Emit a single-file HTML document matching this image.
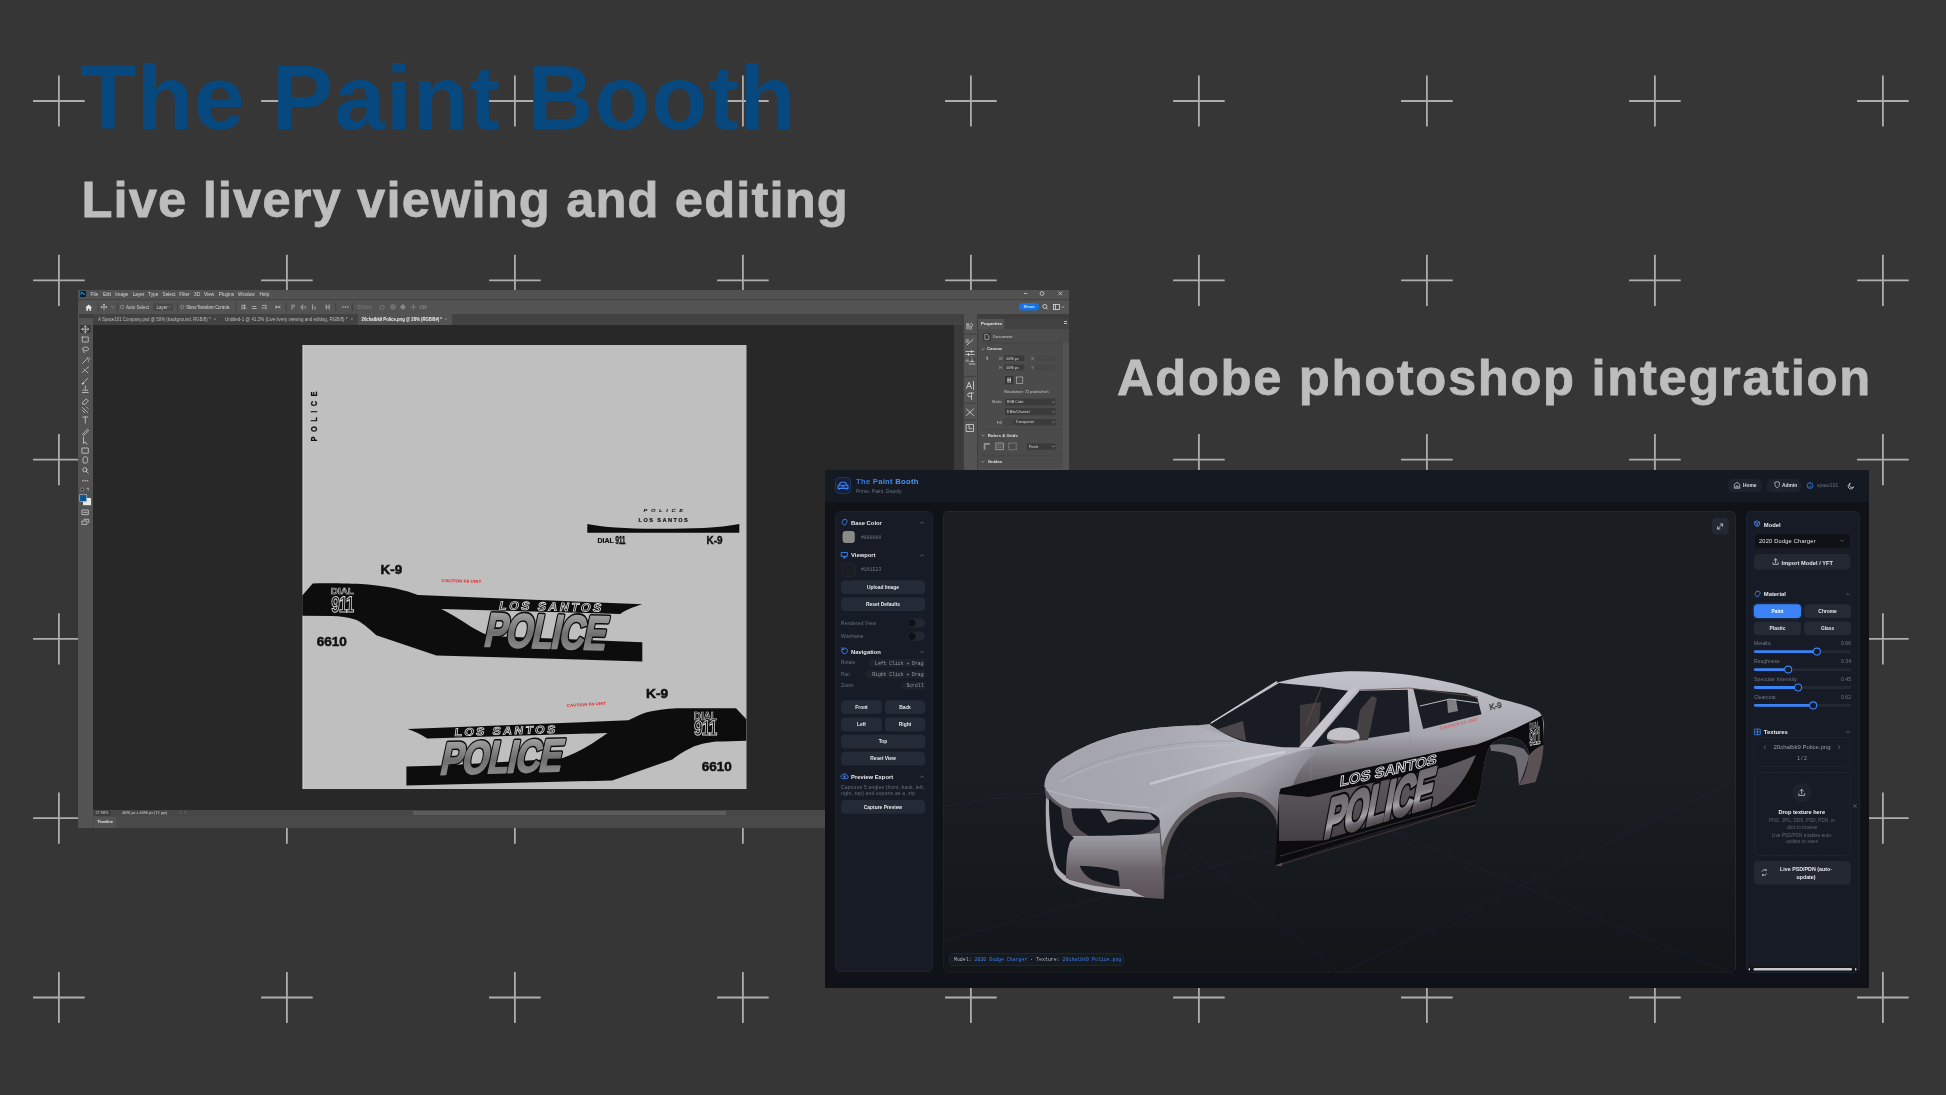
<!DOCTYPE html>
<html><head><meta charset="utf-8">
<style>
*{margin:0;padding:0;box-sizing:border-box}
html,body{width:1946px;height:1095px;overflow:hidden;background:#363636;font-family:"Liberation Sans",sans-serif}
#wrap{position:absolute;left:0;top:0;width:1946px;height:1095px;will-change:transform}
.abs{position:absolute}
svg{overflow:visible}
#title{position:absolute;left:80px;top:52.4px;font-size:91.7px;font-weight:bold;color:#07487e;white-space:nowrap;line-height:1;letter-spacing:0.9px}
#sub{position:absolute;left:81.5px;top:175.1px;font-size:50.7px;font-weight:bold;color:#bdbdbd;white-space:nowrap;line-height:1;letter-spacing:1.13px;-webkit-text-stroke:0.8px #bdbdbd}
#sub2{position:absolute;left:1117px;top:352.9px;font-size:50.7px;font-weight:bold;color:#bdbdbd;white-space:nowrap;line-height:1;letter-spacing:1.68px;-webkit-text-stroke:0.8px #bdbdbd}
</style></head><body><div id="wrap">
<svg class="abs" style="left:0;top:0" width="1946" height="1095"><path d="M33.1 101.0h51.6M58.9 75.4v51.2M33.1 280.3h51.6M58.9 254.7v51.2M33.1 459.6h51.6M58.9 434.0v51.2M33.1 638.9h51.6M58.9 613.3v51.2M33.1 818.2h51.6M58.9 792.6v51.2M33.1 997.5h51.6M58.9 971.9v51.2M261.1 101.0h51.6M286.9 75.4v51.2M261.1 280.3h51.6M286.9 254.7v51.2M261.1 459.6h51.6M286.9 434.0v51.2M261.1 638.9h51.6M286.9 613.3v51.2M261.1 818.2h51.6M286.9 792.6v51.2M261.1 997.5h51.6M286.9 971.9v51.2M489.1 101.0h51.6M514.9 75.4v51.2M489.1 280.3h51.6M514.9 254.7v51.2M489.1 459.6h51.6M514.9 434.0v51.2M489.1 638.9h51.6M514.9 613.3v51.2M489.1 818.2h51.6M514.9 792.6v51.2M489.1 997.5h51.6M514.9 971.9v51.2M717.1 101.0h51.6M742.9 75.4v51.2M717.1 280.3h51.6M742.9 254.7v51.2M717.1 459.6h51.6M742.9 434.0v51.2M717.1 638.9h51.6M742.9 613.3v51.2M717.1 818.2h51.6M742.9 792.6v51.2M717.1 997.5h51.6M742.9 971.9v51.2M945.1 101.0h51.6M970.9 75.4v51.2M945.1 280.3h51.6M970.9 254.7v51.2M945.1 459.6h51.6M970.9 434.0v51.2M945.1 638.9h51.6M970.9 613.3v51.2M945.1 818.2h51.6M970.9 792.6v51.2M945.1 997.5h51.6M970.9 971.9v51.2M1173.1 101.0h51.6M1198.9 75.4v51.2M1173.1 280.3h51.6M1198.9 254.7v51.2M1173.1 459.6h51.6M1198.9 434.0v51.2M1173.1 638.9h51.6M1198.9 613.3v51.2M1173.1 818.2h51.6M1198.9 792.6v51.2M1173.1 997.5h51.6M1198.9 971.9v51.2M1401.1 101.0h51.6M1426.9 75.4v51.2M1401.1 280.3h51.6M1426.9 254.7v51.2M1401.1 459.6h51.6M1426.9 434.0v51.2M1401.1 638.9h51.6M1426.9 613.3v51.2M1401.1 818.2h51.6M1426.9 792.6v51.2M1401.1 997.5h51.6M1426.9 971.9v51.2M1629.1 101.0h51.6M1654.9 75.4v51.2M1629.1 280.3h51.6M1654.9 254.7v51.2M1629.1 459.6h51.6M1654.9 434.0v51.2M1629.1 638.9h51.6M1654.9 613.3v51.2M1629.1 818.2h51.6M1654.9 792.6v51.2M1629.1 997.5h51.6M1654.9 971.9v51.2M1857.1 101.0h51.6M1882.9 75.4v51.2M1857.1 280.3h51.6M1882.9 254.7v51.2M1857.1 459.6h51.6M1882.9 434.0v51.2M1857.1 638.9h51.6M1882.9 613.3v51.2M1857.1 818.2h51.6M1882.9 792.6v51.2M1857.1 997.5h51.6M1882.9 971.9v51.2" stroke="#adadad" stroke-width="1.8" fill="none"/></svg>
<div id="title">The Paint Booth</div>
<div id="sub">Live livery viewing and editing</div>
<div id="sub2">Adobe photoshop integration</div>
<div id="ps" class="abs" style="left:78px;top:290px;width:991px;height:538px;background:#505050;overflow:hidden">
  <!-- menubar -->
  <div class="abs" style="left:0;top:0;width:991px;height:10px;background:#525252;border-bottom:1px solid #424242"></div>
  <div class="abs" style="left:1.7px;top:1px;width:6.3px;height:5.7px;background:#001e36;border-radius:1px;color:#31a8ff;font:bold 4px/5.7px 'Liberation Sans';text-align:center">Ps</div>
  <div class="abs" style="left:0;top:1.5px;font:4.7px/6px 'Liberation Sans';color:#d6d6d6;white-space:nowrap"><span class="abs" style="left:12.6px">File</span><span class="abs" style="left:24.9px">Edit</span><span class="abs" style="left:37.2px">Image</span><span class="abs" style="left:54.7px">Layer</span><span class="abs" style="left:70.1px">Type</span><span class="abs" style="left:84.5px">Select</span><span class="abs" style="left:101.2px">Filter</span><span class="abs" style="left:116.1px">3D</span><span class="abs" style="left:126.1px">View</span><span class="abs" style="left:140.8px">Plugins</span><span class="abs" style="left:160.0px">Window</span><span class="abs" style="left:181.6px">Help</span></div>
  <svg class="abs" style="left:940px;top:0" width="51" height="10"><g stroke="#d0d0d0" stroke-width="0.8" fill="none"><path d="M6 3.5h3.2"/><circle cx="24" cy="3.5" r="1.9"/><path d="M40.6 1.6l3.6 3.6M44.2 1.6l-3.6 3.6"/></g></svg>
  <!-- options bar -->
  <div class="abs" style="left:0;top:10.5px;width:991px;height:13px;background:#535353"></div>
  <svg class="abs" style="left:0;top:10px" width="991" height="14">
    <g fill="#e6e6e6"><path d="M7.3 7.6l3.4-3.2 3.4 3.2h-1v3.2h-1.7v-2.1h-1.4v2.1h-1.7v-3.2z"/></g>
    <g stroke="#3f3f3f" stroke-width="0.9"><path d="M20 2.5v9M39.4 2.5v9M99.5 2.5v9M157.8 2.5v9M208.3 2.5v9M257.7 2.5v9M274.3 2.5v9"/></g>
    <g stroke="#d0d0d0" stroke-width="0.7" fill="none">
      <path d="M23 7h6M26 4v6M23 7l1-1M23 7l1 1M29 7l-1-1M29 7l-1 1M26 4l-1 1M26 4l1 1"/>
      <path d="M33.5 6.5l1.1 1.1 1.1-1.1" stroke="#aaa"/>
      <circle cx="44.1" cy="7" r="1.7" stroke="#999"/>
      <circle cx="104.2" cy="7" r="1.7" stroke="#999"/>
      <path d="M164 4.5v5M165 5.5h2.5M165 8h3.5M166.4 4.5v5M174.3 6.5h4M174 8.5h4.6M188 4.5v5M184 5.5h3M183.5 8h4M197 7h5.5M197.5 5.5l1.5 1.5-1.5 1.5M202 5.5l-1.5 1.5 1.5 1.5"/>
      <path d="M214 4.5v5M216 4.5v3M224.7 4.5v5M223.2 6v2.5M227.2 6v2.5M234.6 4.5v5M237 6.5v3M248.2 4.5v5M251.2 4.5v5M248.5 7h2.4"/>
      <path d="M264.3 7h1.2M266.8 7h1.2M269.3 7h1.2" stroke="#e8e8e8" stroke-width="1.2"/>
    </g>
    <g font-family="Liberation Sans" font-size="4.5">
      <text x="48.1" y="8.7" fill="#cfcfcf">Auto Select</text>
      <rect x="75.2" y="3.6" width="19.7" height="7" fill="#474747"/>
      <text x="78.5" y="8.7" fill="#cfcfcf">Layer</text>
      <path d="M90.5 6.6l1 1 1-1" stroke="#aaa" stroke-width="0.5" fill="none"/>
      <text x="108.2" y="8.7" fill="#cfcfcf" textLength="43.4">Show Transform Controls</text>
      <text x="278.6" y="8.7" fill="#7a7a7a" textLength="16">3D Mode:</text>
    </g>
    <g stroke="#8a8a8a" stroke-width="0.7" fill="none">
      <path d="M302 7.5c0-2 3-3 4-1s-1 3-2.5 3-1.5-1-1.5-2z"/><circle cx="315" cy="7" r="2.4"/><circle cx="315" cy="7" r="1.2"/>
      <path d="M322.4 7h5M324.9 4.5v5M322.4 7l2.5-2.5 2.5 2.5-2.5 2.5z" fill="#8a8a8a"/>
      <path d="M332.4 7h6M335.4 4v6"/>
      <path d="M342 5.8h3.5v2.6h-3.5zM345.5 7l2.5-1.8v3.6z"/>
    </g>
    <rect x="941" y="3" width="20" height="7.5" rx="3.75" fill="#1473e6"/>
    <text x="951" y="8.4" font-family="Liberation Sans" font-size="4.2" fill="#fff" text-anchor="middle">Share</text>
    <g stroke="#ddd" stroke-width="0.8" fill="none"><circle cx="966.8" cy="6.4" r="2"/><path d="M968.2 7.8l1.5 1.5"/><rect x="975.5" y="4.5" width="6" height="5"/><path d="M977.5 4.5v5M984 6.5l1 1 1-1"/></g>
  </svg>
  <!-- tab bar -->
  <div class="abs" style="left:15px;top:23.5px;width:870px;height:11px;background:#424242"></div>
  <div class="abs" style="left:280px;top:24px;width:93.6px;height:10.5px;background:#535353"></div>
  <svg class="abs" style="left:0;top:23.5px" width="400" height="11">
    <g font-family="Liberation Sans" font-size="4.7" fill="#bcbcbc">
      <text x="20" y="7.3" textLength="112.6" lengthAdjust="spacingAndGlyphs">A Space101 Company.psd @ 50% (background, RGB/8) *</text>
      <text x="147" y="7.3" textLength="122.5" lengthAdjust="spacingAndGlyphs">Untitled-1 @ 41.2% (Live livery viewing and editing, RGB/8) *</text>
      <text x="283.6" y="7.3" textLength="80.4" lengthAdjust="spacingAndGlyphs" fill="#f2f2f2" font-weight="bold">20chalbk9 Police.png @ 28% (RGB/8#) *</text>
    </g>
    <g stroke="#9a9a9a" stroke-width="0.5"><path d="M136 4.2l1.8 1.8M137.8 4.2l-1.8 1.8M273 4.2l1.8 1.8M274.8 4.2l-1.8 1.8M367 4.2l1.8 1.8M368.8 4.2l-1.8 1.8"/></g>
    <path d="M144 1v9" stroke="#3a3a3a" stroke-width="0.6"/>
  </svg>
  <!-- toolbar column -->
  <div class="abs" style="left:0;top:23.5px;width:15px;height:515px;background:#535353"></div>
  <div class="abs" style="left:1px;top:23.5px;width:14px;height:4px;background:#3e3e3e"></div>
  <div class="abs" style="left:1.6px;top:35px;width:11.4px;height:8px;background:#3a3a3a;border-radius:1px"></div>
  <svg class="abs" style="left:0;top:30px" width="15" height="240">
    <g stroke="#d6d6d6" stroke-width="0.75" fill="none" stroke-linecap="round" stroke-linejoin="round">
      <path d="M7.3 6v6.5M4 9.2h6.6M7.3 6l-1 1M7.3 6l1 1M7.3 12.5l-1-1M7.3 12.5l1-1M4 9.2l1-1M4 9.2l1 1M10.6 9.2l-1-1M10.6 9.2l-1 1"/>
      <path d="M4.3 17h6v5h-6z" stroke-dasharray="1 0.8"/>
      <path d="M4.5 29c0-2.6 6-2.6 6 0s-5 2.3-6 0M5.3 30.8l.8 2"/>
      <path d="M4.5 43.5l5.5-5.5M9 37.5l1.5 1.5M10.5 41v.5M11.5 39h.3"/>
      <path d="M4.5 52.5l2-2M6 49l4 4M8.5 48.5l2-1.5"/>
      <path d="M4.6 63.5l5-5"/><path d="M4.3 63.8l1.2-.5" stroke-width="1.4"/>
      <path d="M7.3 66v3.2M5 70.2h4.6M4.4 72.5h5.8"/>
      <path d="M5 82l3.2-3.2 2.2 2.2-3.2 3.2h-2.2z"/>
      <path d="M4.5 87.5l5 5M4.5 90.5l2 2M8.5 87l1.5 1.5"/>
      <path d="M4.8 97h5M7.3 97v6.2"/>
      <path d="M4.8 114l4.8-4.8 1.2 1.2-4.8 4.8z"/>
      <path d="M5.5 117v6.5l1.8-1.7 1.6 2.6"/>
      <path d="M4.3 128h6v5.2h-6z"/>
      <path d="M5 141.5c-.5-3 .5-5 2.3-5s2.6 2 2.3 5l-1 1.5h-2.6z"/>
      <circle cx="6.8" cy="149.8" r="2.1"/><path d="M8.3 151.3l2 2"/>
      <path d="M4.7 160.8h.5M7 160.8h.5M9.3 160.8h.5" stroke-width="1.1"/>
      <path d="M4.3 190h6v4.6h-6zM5.5 192.3h3.6"/>
      <path d="M4.3 201h4.6v3.4h-4.6zM6 199.3h4.8v3.4"/>
    </g>
    <circle cx="4.2" cy="169.5" r="1.4" fill="#111" stroke="#ddd" stroke-width="0.5"/>
    <path d="M8.6 168.3h1.7v2.2" stroke="#ddd" stroke-width="0.6" fill="none"/>
    <rect x="5" y="178" width="8" height="7.2" fill="#e8e8e8"/>
    <rect x="1.8" y="174.8" width="7" height="6.8" fill="#0b5394" stroke="#ddd" stroke-width="0.5"/>
  </svg>
  <!-- canvas -->
  <div class="abs" style="left:15px;top:34.5px;width:861px;height:485.5px;background:#282828"></div>
  <div class="abs" style="left:876px;top:34.5px;width:8.5px;height:485.5px;background:#3a3a3a"></div>
  <!-- icon column -->
  <div class="abs" style="left:884.5px;top:23.5px;width:15px;height:515px;background:#535353;border-left:1px solid #3e3e3e;border-right:1px solid #3e3e3e"></div>
  <svg class="abs" style="left:885px;top:28px" width="14" height="130">
    <g stroke="#d8d8d8" stroke-width="0.8" fill="none" stroke-linecap="round">
      <path d="M4 6v5M4 6h2v5M8 5.5c2 0 2 3 0 3s2 0 0 3"/>
      <path d="M4 27l6-5.5M3 22h2.5M3 24h2.5"/>
      <path d="M3 33.5h8M3 36.5h8M8.5 32.5v2M5.5 35.5v2"/>
      <path d="M3 41h2.5M3 43h2.5M6 46h6M9 40v2.5M7.5 43.5h3"/>
      <path d="M3.5 70.5l2.5-6.5 2.5 6.5M4.5 68.5h3M10.5 63.5v8"/>
      <path d="M6.5 75h4M8.5 75v6.5M6.5 75a1.8 1.8 0 0 0 0 3.6h2"/>
      <path d="M3.5 97.5l7-6.5M3.5 91l7 6.5"/>
      <path d="M3.5 106.5h7v7h-7zM6 107.5v3.2h3"/>
    </g>
    <g stroke="#3e3e3e" stroke-width="0.9"><path d="M1 16.1h12M1 40.9h12M1 58.3h12M1 85.4h12M1 101.9h12"/></g>
  </svg>
  <!-- properties panel -->
  <div class="abs" style="left:900px;top:23.5px;width:91px;height:5px;background:#3e3e3e"></div>
  <div class="abs" style="left:900px;top:28.5px;width:91px;height:10px;background:#424242"></div>
  <div class="abs" style="left:900px;top:28.5px;width:25.8px;height:10px;background:#535353;font:bold 4.3px/9.5px 'Liberation Sans';color:#e8e8e8;padding-left:3px">Properties</div>
  <div class="abs" style="left:986px;top:31px;width:3px;height:3px;border-top:0.7px solid #bbb;border-bottom:0.7px solid #bbb"></div>
  <div class="abs" style="left:900px;top:38.5px;width:91px;height:500px;background:#535353"></div>
  
  <svg class="abs" style="left:900px;top:38.5px" width="91" height="140">
    <rect x="0" y="0" width="91" height="140" fill="#4b4b4b"/>
    <rect x="85" y="14" width="6" height="126" fill="#535353"/>
    <rect x="5.1" y="4.1" width="7.6" height="7.5" fill="#383838"/>
    <path d="M6.8 5.4h2.6l1.4 1.4v3.6h-4z" stroke="#ddd" stroke-width="0.55" fill="none"/>
    <g font-family="Liberation Sans" font-size="4.3" fill="#cfcfcf">
      <text x="14.9" y="9.4">Document</text>
      <text x="8.9" y="21.4" font-weight="bold" fill="#e0e0e0">Canvas</text>
      <text x="20.9" y="30.6" fill="#aaa" font-size="3.8">W</text>
      <text x="21.3" y="39.9" fill="#aaa" font-size="3.8">H</text>
      <text x="53.3" y="30.6" fill="#aaa" font-size="3.8">X</text>
      <text x="53.3" y="39.9" fill="#aaa" font-size="3.8">Y</text>
      <text x="26.2" y="64" font-size="3.7" textLength="44.4">Resolution: 72 pixels/inch</text>
      <text x="13.9" y="73.8" font-size="3.9" fill="#bbb">Mode</text>
      <text x="18.7" y="94.5" font-size="3.9" fill="#bbb">Fill</text>
      <text x="9.7" y="107.7" font-weight="bold" fill="#e0e0e0">Rulers &amp; Grids</text>
      <text x="9.7" y="134" font-weight="bold" fill="#e0e0e0">Guides</text>
    </g>
    <g fill="#3b3b3b">
      <rect x="26.5" y="26.4" width="19.6" height="5.6"/><rect x="26.5" y="35.7" width="19.6" height="5.6"/>
      <rect x="58.1" y="26.4" width="19.3" height="5.6" fill="#474747"/><rect x="58.1" y="35.7" width="19.3" height="5.6" fill="#474747"/>
      <rect x="27" y="69.6" width="50.4" height="6.8"/><rect x="27" y="79.1" width="50.4" height="7.1"/>
      <rect x="35.3" y="90" width="42.1" height="6.3"/><rect x="48.8" y="114.3" width="28.6" height="6.5"/>
      <rect x="26.2" y="90" width="7.5" height="6.3" fill="#474747" stroke="#3a3a3a" stroke-width="0.4"/>
      <rect x="27" y="47" width="8.3" height="8.3" fill="#333"/>
    </g>
    <g font-family="Liberation Sans" font-size="3.5" fill="#d8d8d8">
      <text x="28" y="30.5">4096 px</text><text x="28" y="39.8">4096 px</text>
      <text x="28.8" y="74.3">RGB Color</text><text x="28.8" y="84">8 Bits/Channel</text><text x="37.5" y="94.4">Transparent</text><text x="51" y="118.8">Pixels</text>
    </g>
    <g stroke="#ccc" stroke-width="0.55" fill="none">
      <path d="M3.7 19.6l1.3 1.3 1.3-1.3M3.7 105.9l1.3 1.3 1.3-1.3M3.7 132.2l1.3 1.3 1.3-1.3"/>
      <path d="M74.3 72.5l1 1 1-1M74.3 82.2l1 1 1-1M74.3 92.7l1 1 1-1M74.3 117l1 1 1-1"/>
      <path d="M9.2 27.5v3.4M8.4 28.4h1.6M8.4 30h1.6"/>
      <rect x="38.3" y="48" width="6.5" height="6.5"/>
      <path d="M6.2 120.8v-6.3h5.7M7 120.8v-5.5h4.9"/>
      <rect x="17.9" y="114" width="7.6" height="6.8"/><path d="M20.4 114v6.8M22.9 114v6.8M17.9 116.3h7.6M17.9 118.5h7.6" stroke="#999" stroke-width="0.3"/>
      <rect x="30.7" y="114" width="7.6" height="6.8" stroke-dasharray="0.8 0.6"/>
    </g>
    <path d="M30 48.5v5.5M32.2 48.5v5.5M29.3 51h3.6" stroke="#eee" stroke-width="0.8"/>
    <g stroke="#424242" stroke-width="0.6"><path d="M4 14h80M4 100.5h80M4 126.8h80"/></g>
  </svg>
  <svg class="abs" style="left:0;top:0" width="991" height="538" viewBox="78 290 991 538">
  <defs>
    <linearGradient id="polg" x1="0" y1="0" x2="0" y2="1">
      <stop offset="0" stop-color="#b5b5b5"/><stop offset="0.55" stop-color="#6e6e6e"/><stop offset="1" stop-color="#9a9a9a"/>
    </linearGradient>
  </defs>
  <rect x="302.5" y="345" width="444" height="444" fill="#bfbfbf"/><path id="docedge" d="M303.2 345v444" stroke="#d2d2d2" stroke-width="0.8"/>
  <g fill="#0d0d0d">
    <!-- upper stripe -->
    <path d="M302.3 595.4L312.7 583.4C330 583 357 583.5 368 584.5C392 587 405 590 417.9 595L642.3 604.2C633 607 625 610 620.3 614L441.1 608.9C452 614 462 621 475 629C480 632 485 634 490 636L642.3 642.2V661.4L436.4 655.6L376.3 635.2C368 628 362 622 355 619.5C348 617 340 616.3 332 616L302.3 615.8Z"/>
    <!-- lower stripe -->
    <path d="M736 708.3L746.3 719.2V740.7C735 741 725 741.3 716.3 741.6C705 743 697 745 690.8 748C684 751 678 755 672.3 759.6L612.2 780.5L406.4 785.5V766.6L443.4 765.4L561.3 758.5C580 752 595 742 607.6 733L427.2 738.4C420 734 414 731 407.5 729.1L628.4 720.3C635 717 641 714 646.9 712.2C660 709.5 670 708.5 681.6 708.3Z"/>
    <!-- top bar -->
    <path d="M587.3 524C610 528.5 640 528.8 663 528.8C690 528.8 720 528 739.3 524V532.8H587.3Z"/>
  </g>
  <g transform="matrix(0.3460 0.0103 -0.1000 0.4786 482.58 646.23)" font-family="Liberation Sans" font-weight="bold" font-size="100" letter-spacing="-4"><text fill="#0d0d0d" stroke="#0d0d0d" stroke-width="10" stroke-linejoin="round">POLICE</text><text fill="url(#polg)" stroke="url(#polg)" stroke-width="3.5" stroke-linejoin="round">POLICE</text></g>
<g transform="matrix(0.3460 -0.0103 -0.1000 0.4629 438.58 774.77)" font-family="Liberation Sans" font-weight="bold" font-size="100" letter-spacing="-4"><text fill="#0d0d0d" stroke="#0d0d0d" stroke-width="10" stroke-linejoin="round">POLICE</text><text fill="url(#polg)" stroke="url(#polg)" stroke-width="3.5" stroke-linejoin="round">POLICE</text></g>
<text transform="matrix(0.1232 0.0028 -0.0257 0.1157 498.54 609.28)" font-family="Liberation Sans" font-weight="bold" font-size="100" letter-spacing="20" fill="#0d0d0d" stroke="#d8d8d8" stroke-width="7">LOS SANTOS</text>
<text transform="matrix(0.1215 -0.0037 -0.0143 0.1086 454.15 736.03)" font-family="Liberation Sans" font-weight="bold" font-size="100" letter-spacing="20" fill="#0d0d0d" stroke="#d8d8d8" stroke-width="7">LOS SANTOS</text>
<text transform="matrix(0.0991 0.0000 -0.0000 0.0929 330.81 594.30)" font-family="Liberation Sans" font-weight="bold" font-size="100" fill="#0d0d0d" stroke="#d0d0d0" stroke-width="6">DIAL</text>
<text transform="matrix(0.1541 0.0000 -0.0071 0.2229 331.04 611.60)" font-family="Liberation Sans" font-weight="bold" font-size="100" letter-spacing="-6" fill="#0d0d0d" stroke="#d0d0d0" stroke-width="5">911</text>
<text transform="matrix(0.0991 0.0000 -0.0000 0.1043 693.81 719.80)" font-family="Liberation Sans" font-weight="bold" font-size="100" fill="#0d0d0d" stroke="#d0d0d0" stroke-width="6">DIAL</text>
<text transform="matrix(0.1561 0.0000 -0.0071 0.2057 693.83 735.40)" font-family="Liberation Sans" font-weight="bold" font-size="100" letter-spacing="-6" fill="#0d0d0d" stroke="#d0d0d0" stroke-width="5">911</text>
<text transform="matrix(0.1355 0.0000 -0.0000 0.1329 316.76 646.30)" font-family="Liberation Sans" font-weight="bold" font-size="100" fill="#111" stroke="#111" stroke-width="4">6610</text>
<text transform="matrix(0.1350 0.0000 -0.0000 0.1314 701.86 771.20)" font-family="Liberation Sans" font-weight="bold" font-size="100" fill="#111" stroke="#111" stroke-width="4">6610</text>
<text transform="matrix(0.1340 0.0000 -0.0000 0.1357 380.56 573.90)" font-family="Liberation Sans" font-weight="bold" font-size="100" fill="#111" stroke="#111" stroke-width="4">K-9</text>
<text transform="matrix(0.1380 0.0000 -0.0000 0.1329 646.03 698.40)" font-family="Liberation Sans" font-weight="bold" font-size="100" fill="#111" stroke="#111" stroke-width="4">K-9</text>
<text transform="matrix(0.0993 0.0000 -0.0000 0.1114 706.60 543.80)" font-family="Liberation Sans" font-weight="bold" font-size="100" fill="#111" stroke="#111" stroke-width="4">K-9</text>
<text transform="matrix(0.0698 0.0000 -0.0000 0.0686 597.51 542.80)" font-family="Liberation Sans" font-weight="bold" font-size="100" fill="#111" stroke="#111" stroke-width="3">DIAL</text>
<text transform="matrix(0.0684 0.0000 -0.0000 0.1114 615.19 543.80)" font-family="Liberation Sans" font-weight="bold" font-size="100" letter-spacing="-4" fill="#111" stroke="#111" stroke-width="3">911</text>
<text transform="matrix(0.0593 0.0000 -0.0086 0.0457 643.18 511.50)" font-family="Liberation Sans" font-weight="bold" font-size="100" letter-spacing="60" fill="#111">POLICE</text>
<text transform="matrix(0.0563 0.0000 -0.0000 0.0600 638.61 522.00)" font-family="Liberation Sans" font-weight="bold" font-size="100" letter-spacing="25" fill="#111" stroke="#111" stroke-width="3">LOS SANTOS</text>
<text transform="matrix(0.0455 0.0012 -0.0014 0.0429 441.62 582.00)" font-family="Liberation Sans" font-weight="bold" font-size="100" fill="#e8262b">CAUTION K9 UNIT</text>
<text transform="matrix(0.0455 -0.0029 0.0029 0.0400 566.82 707.01)" font-family="Liberation Sans" font-weight="bold" font-size="100" fill="#e8262b">CAUTION K9 UNIT</text>
<text transform="matrix(0.0000 -0.0743 0.0914 -0.0000 317.10 441.42)" font-family="Liberation Sans" font-weight="bold" font-size="100" letter-spacing="60" fill="#111" stroke="#111" stroke-width="3">POLICE</text>
</svg>

  <!-- status bar -->
  <div class="abs" style="left:15px;top:520px;width:869px;height:6.3px;background:#474747"></div>
  <div class="abs" style="left:15.5px;top:520.5px;width:17px;height:5.3px;background:#3d3d3d"></div>
  <div class="abs" style="left:335px;top:521px;width:313.4px;height:4px;background:#5c5c5c;border-radius:1px"></div>
  <div class="abs" style="left:17.5px;top:520.3px;font:3.8px/6px 'Liberation Sans';color:#cfcfcf;white-space:nowrap">27.98%</div>
  <div class="abs" style="left:44px;top:520.3px;font:3.8px/6px 'Liberation Sans';color:#cfcfcf;white-space:nowrap">4096 px x 4096 px (72 ppi)</div>
  <div class="abs" style="left:102px;top:520.3px;font:4px/6px 'Liberation Sans';color:#bbb;white-space:nowrap">›&nbsp;&nbsp;&nbsp;‹</div>
  <div class="abs" style="left:15px;top:526.3px;width:869px;height:12px;background:#4a4a4a"></div>
  <div class="abs" style="left:16px;top:526.8px;width:22px;height:11px;background:#535353;font:bold 3.9px/10px 'Liberation Sans';color:#e6e6e6;text-align:center">Timeline</div>
</div>

<div class="abs" style="left:825px;top:470px;width:1044px;height:518px;background:#0f1217"></div>
<div class="abs" style="left:825px;top:470px;width:1044px;height:31.5px;background:#141922"></div>
<!-- logo -->
<div class="abs" style="left:834.7px;top:477.1px;width:16.2px;height:16.5px;background:#142037;border:1px solid #1d3763;border-radius:4.5px"></div>
<svg class="abs" style="left:836px;top:479px" width="14" height="13" viewBox="0 0 14 13">
  <g stroke="#3b82f6" stroke-width="1.1" fill="none" stroke-linecap="round" stroke-linejoin="round">
    <path d="M3.2 6.2l.9-2.2c.2-.5.6-.8 1.1-.8h3.6c.5 0 .9.3 1.1.8l.9 2.2"/>
    <path d="M2.8 6.2h8.4c.5 0 .8.3.8.8v2.4H2v-2.4c0-.5.3-.8.8-.8z"/>
    <path d="M3.2 9.4v1.2M10.8 9.4v1.2M5.6 7.8h2.8"/>
  </g>
</svg>
<div class="abs" style="left:856px;top:477px;font:bold 7.7px/9px 'Liberation Sans';color:transparent;background:linear-gradient(90deg,#2f7bf5,#5aa0f8);-webkit-background-clip:text;background-clip:text;white-space:nowrap;letter-spacing:0.25px">The Paint Booth</div>
<div class="abs" style="left:856px;top:488.8px;font:4.9px/6px 'Liberation Sans';color:#6b7280;white-space:nowrap;letter-spacing:0.05px">Prime. Paint. Depoly.</div>
<!-- header right -->
<div class="abs" style="left:1728.4px;top:478.7px;width:33.4px;height:13.5px;background:#1d222c;border-radius:5px"></div>
<div class="abs" style="left:1766.8px;top:478.7px;width:34.7px;height:13.5px;background:#1d222c;border-radius:5px"></div>
<svg class="abs" style="left:1720px;top:476px" width="149" height="20" viewBox="1720 476 149 20">
  <g stroke="#c9ccd2" stroke-width="0.75" fill="none" stroke-linejoin="round" stroke-linecap="round">
    <path d="M1734.3 487.8v-3.3l2.7-2.2 2.7 2.2v3.3z"/><path d="M1736 487.8v-1.8h2v1.8"/>
    <path d="M1775 482.4l2.2-.8 2.2.8v2.2c0 1.6-1 2.7-2.2 3.2-1.2-.5-2.2-1.6-2.2-3.2z"/>
    <path d="M1850 483.5a2.8 2.8 0 1 0 3.6 3.3a2.3 2.3 0 0 1 -3.6 -3.3z" stroke="#d7dae0"/>
  </g>
  <circle cx="1810" cy="485.5" r="2.9" stroke="#3b82f6" stroke-width="0.8" fill="none"/>
  <path d="M1810 483.5v1.5M1808.6 487.5c.3-.9.8-1.3 1.4-1.3s1.1.4 1.4 1.3" stroke="#3b82f6" stroke-width="0.6" fill="none"/>
  <g font-family="Liberation Sans" font-size="4.9">
    <text x="1743" y="487.3" fill="#d7dae0" font-weight="bold">Home</text>
    <text x="1782" y="487.3" fill="#d7dae0" font-weight="bold">Admin</text>
    <text x="1817" y="487.3" fill="#6b7280">space101</text>
  </g>
</svg>
<!-- panels -->
<div class="abs" style="left:834.5px;top:511.4px;width:98px;height:461px;background:#161b25;border:1px solid #1c2230;border-radius:5px"></div>
<div class="abs" style="left:942.5px;top:511px;width:793px;height:461.5px;background:#1a1e23;border:1px solid #22272f;border-radius:5px;overflow:hidden" id="vp"></div>
<svg class="abs" style="left:943px;top:512px" width="792" height="460" viewBox="943 512 792 460">
  <defs>
    <linearGradient id="bodyg" x1="0" y1="670" x2="0" y2="900" gradientUnits="userSpaceOnUse">
      <stop offset="0" stop-color="#c4c4cc"/>
      <stop offset="0.13" stop-color="#b6b6be"/>
      <stop offset="0.28" stop-color="#a6a6ae"/>
      <stop offset="0.41" stop-color="#78757c"/>
      <stop offset="0.52" stop-color="#5c585e"/>
      <stop offset="1" stop-color="#4e464b"/>
    </linearGradient>
    <linearGradient id="hoodg" x1="1050" y1="800" x2="1250" y2="730" gradientUnits="userSpaceOnUse">
      <stop offset="0" stop-color="#a3a3ab"/>
      <stop offset="0.6" stop-color="#a9a9b1"/>
      <stop offset="1" stop-color="#b8b8c0"/>
    </linearGradient>
    <linearGradient id="bumpg" x1="0" y1="836" x2="0" y2="900" gradientUnits="userSpaceOnUse">
      <stop offset="0" stop-color="#9c9ba2"/><stop offset="0.25" stop-color="#858389"/><stop offset="0.55" stop-color="#6a6368"/><stop offset="1" stop-color="#5a5156"/>
    </linearGradient>
    <linearGradient id="swg" x1="0" y1="760" x2="0" y2="845" gradientUnits="userSpaceOnUse">
      <stop offset="0" stop-color="#5f5b61"/><stop offset="0.5" stop-color="#555055"/><stop offset="1" stop-color="#433e42"/>
    </linearGradient>
    <linearGradient id="polcar2" x1="0" y1="-71" x2="0" y2="0" gradientUnits="userSpaceOnUse">
      <stop offset="0" stop-color="#6f6a6e"/><stop offset="0.5" stop-color="#7f7a7e"/><stop offset="0.7" stop-color="#a5a3a8"/><stop offset="0.85" stop-color="#67626a"/><stop offset="1" stop-color="#524d50"/>
    </linearGradient>
  <linearGradient id="fendg" x1="1200" y1="760" x2="1260" y2="835" gradientUnits="userSpaceOnUse">
      <stop offset="0" stop-color="#b2b2ba"/><stop offset="0.55" stop-color="#9c9ba3"/><stop offset="1" stop-color="#737077"/>
    </linearGradient>
  </defs>
  <!-- floor shade + faint grid -->
  <defs><linearGradient id="floorg" x1="0" y1="760" x2="0" y2="973" gradientUnits="userSpaceOnUse"><stop offset="0" stop-color="#000" stop-opacity="0"/><stop offset="1" stop-color="#000" stop-opacity="0.3"/></linearGradient></defs>
  <rect x="943" y="760" width="792" height="213" fill="url(#floorg)"/>
  <g stroke="#1d2f4d" stroke-width="0.8" opacity="0.45" fill="none">
    <path d="M943 941L1290 846"/>
    <path d="M1168 830L1340 973"/>
    <path d="M1342 973L1735 781"/>
    <path d="M1300 793L1735 975"/>
    <path d="M943 806L1060 790"/>
  </g>
  <!-- main body -->
  <path fill="url(#bodyg)" d="M1044.3 786C1045 775 1050 768 1058 762C1075 750 1095 741 1120 734C1145 728 1170 726 1196 725.4L1209.5 724.1L1275.3 683C1300 676 1330 671.5 1354 671.2C1385 671 1420 675 1454 683.5C1475 689 1490 695 1500 699C1515 702.5 1528 705.5 1538 711C1543 715 1544.5 722 1544 730C1543.5 745 1541 765 1535.3 782.1L1519.3 785.2C1524 778 1528 768 1529 756C1529 748 1524 741 1515 738C1505 736 1495 740 1490 746C1485 755 1483 770 1481 785L1475.8 804.7L1380.4 831L1275.4 865L1278 866C1279 850 1279 833 1276 820C1270 806 1258 798 1240 797C1215 797 1195 806 1180 823C1170 836 1166 850 1165 866L1164 898.7C1140 898 1110 893 1092 888C1078 885 1068 882 1062 877C1056 872 1050 860 1047 845C1045.5 830 1045.5 810 1046 798Z"/>
  <!-- hood -->
  <path fill="url(#hoodg)" d="M1044.5 786C1045 775 1050 768 1058 762C1075 750 1095 741 1120 734C1145 728 1170 726 1196 725.4C1215 733 1240 740 1282 747C1300 748 1310 748 1320 747.5C1290 760 1250 775 1215 790C1195 798 1180 806 1161 815C1150 811 1120 808.5 1071 808.5C1060 806 1050 798 1044.5 786Z"/>
  <path d="M1062 778C1100 756 1160 740 1235 741" stroke="#8e8e96" stroke-width="0.8" opacity="0.6" fill="none"/>
  <path d="M1060 782C1098 760 1160 745 1236 745" stroke="#c4c4cc" stroke-width="1" opacity="0.5" fill="none"/>
  <path d="M1150 784C1190 772 1230 761 1285 752" stroke="#dcdce4" stroke-width="2.4" opacity="0.55" fill="none"/>
  <path d="M1046 790C1080 800 1120 806 1150 808" stroke="#c8c8d0" stroke-width="1" opacity="0.6" fill="none"/>
  <!-- fender light -->
  <path fill="url(#fendg)" d="M1150 811C1180 800 1220 782 1260 765C1290 752 1310 748 1322 747.5C1312 755 1302 765 1296 778C1290 790 1286 805 1283 822C1277 806 1262 793 1240 792C1218 791 1196 800 1180 816C1172 825 1166 835 1162 848L1159.7 822Z"/>
  <!-- arch rim front -->
  <path fill="#5b5659" d="M1159.7 868C1160 850 1166 832 1180 816C1196 800 1218 791 1240 792C1262 793 1277 806 1282 822C1284 835 1283 850 1282 866L1278 866C1279 850 1279 833 1276 820C1270 806 1258 798 1240 797C1215 797 1195 806 1180 823C1170 836 1166 850 1165 866Z"/>
  <!-- windshield -->
  <path fill="#191c22" d="M1209.5 724.6L1279 683L1321.6 687.1L1348.3 690.7L1299 747.2L1282.5 747.2C1265 745 1250 743 1241.4 741C1230 737 1218 730 1209.5 724.6Z"/>
  <path fill="#4a4649" d="M1218 729L1243 721L1246 741C1235 738 1225 734 1218 729Z"/>
  <path fill="#3f3b3e" d="M1300 705L1321 702L1318 735L1305 746L1300 746Z"/>
  <path d="M1211 723L1277 681.5" stroke="#d8d7dc" stroke-width="1.1" fill="none"/>
  <path d="M1322 686L1306 725" stroke="#6b4f4c" stroke-width="0.8" fill="none"/>
  <!-- near A pillar -->
  <path fill="#c6c5cb" d="M1348.3 690.7L1359.6 685.6L1311.3 747.2L1299 747.2Z"/>
  <!-- side windows -->
  <path fill="#1a1d23" d="M1359.6 690.7L1407.7 689.7L1409.6 731.5L1311.3 747.2Z"/>
  <path fill="#1a1d23" d="M1413.3 688.4L1466.3 693.4L1477.4 698.3L1481.5 714.3L1423.2 729.1Z"/>
  <path fill="#454044" d="M1360 710L1372 696L1377 698L1368 740L1355 741Z"/>
  <path fill="#d3d1d6" d="M1447 700l9 -1 2 12 -10 2z" opacity="0.55"/>
  <path d="M1420 706L1450 699L1478 703" stroke="#bdbbbf" stroke-width="1" fill="none"/>
  <path d="M1359 690L1409 688L1478 697" stroke="#6f504d" stroke-width="0.8" fill="none"/>
  <!-- mirror -->
  <path fill="#c2c1c6" d="M1327 738C1326 732 1333 727.5 1343 727.5C1354 727.5 1360 732 1359.6 738C1359 742 1350 743.5 1340 743C1332 742.5 1327.5 741 1327 738Z"/>
  <path fill="#6e6569" d="M1327.5 738.5C1335 741 1350 741.5 1359.5 738.5C1358 742 1350 744 1340 743.5C1332 743 1328 741 1327.5 738.5Z"/>
  <!-- door lines -->
  <path d="M1310.5 748L1311 795M1409.6 732L1412 778" stroke="#8f8c91" stroke-width="0.6" opacity="0.7" fill="none"/>
  <!-- livery black -->
  <path fill="#0c0b0d" d="M1280.7 788.6C1300 783.5 1330 776 1360 769C1400 760 1440 751 1476.8 744.4C1495 738 1515 729 1542 715.5C1543.5 722 1544 735 1543.5 745C1536 748 1532 752 1529 756C1529 748 1524 741 1515 738C1505 736 1495 740 1490 746C1485 755 1483 770 1481 785L1475.8 804.7L1380.4 831L1275.4 865L1279 794Z"/>
  <!-- gray swoosh under band -->
  <path fill="url(#swg)" d="M1279 794L1308.8 797C1340 790 1380 781 1420 773C1440 769 1455 764 1476 755C1468 775 1455 795 1436 806L1321 840.5L1279 841Z"/>
  <!-- sill -->
  <path d="M1280 856L1475.8 800.5" stroke="#3a3a40" stroke-width="0.9" fill="none"/>
  <path d="M1276 866L1476 805" stroke="#5a3f3c" stroke-width="0.9" fill="none" opacity="0.8"/>
  <!-- rear arch inner panel -->
  <path fill="#77737a" d="M1490 745C1500 743 1515 745 1524 749L1529 756C1526 768 1522 778 1519 785.2C1518 775 1518 765 1515 757C1508 753 1498 751 1491 751Z" opacity="0.9"/>
  <!-- rear lower bumper -->
  <path fill="#5b5155" d="M1529 756C1532 752 1536 748 1543.5 745C1543 758 1540 770 1535.3 782.1L1519.3 785.2C1524 778 1528 768 1529 756Z"/>
  <!-- headlight gap -->
  <path fill="#15181e" d="M1071.2 808.5C1100 808.5 1135 810.5 1152.8 813.7C1158 816 1160 819 1159.7 822C1158 828 1150 832 1140 835C1120 837 1100 837 1088.6 835.4C1080 831 1075 826 1073 820Z"/>
  <path fill="#a8a7ad" d="M1100 810L1150 813.5L1156 820L1120 819L1108 823Z" opacity="0.85"/>
  <!-- bumper band -->
  <path fill="url(#bumpg)" d="M1062 836C1090 836 1130 836 1159.7 833L1164 898.7C1140 898 1110 893 1092 888C1078 885 1070 880 1066 876C1066 862 1067 850 1070 842Z"/>
  <!-- grille gap -->
  <path fill="#15181e" d="M1049 798C1053 803 1058 806 1061 808C1062 815 1062.5 822 1064 828C1068 833 1072 836 1074 838L1070 842C1067 850 1066 862 1066 876C1060 872 1055 865 1052 858C1050 845 1049 825 1049 798Z"/>
  <!-- lower intake -->
  <path fill="#15181e" d="M1079.9 865.8C1092 866 1108 868 1118.1 871C1119 876 1119.5 882 1119.8 886.6C1110 885 1098 882 1092 879.7C1085 876 1081 870 1079.9 865.8Z"/>
  <path fill="#b2b1b7" d="M1046 798L1049 800C1049 825 1050 845 1052 858C1055 865 1060 872 1066 876L1066 881.4C1058 874 1052 862 1049 850C1046 835 1045.5 815 1046 798Z" opacity="0.9"/>
  <path fill="#b3b2b8" d="M1052 858C1056 868 1062 876 1070 880C1090 886 1115 889 1130 889C1135 893 1140 895 1145 897C1120 896 1095 892 1078 887C1066 884 1058 878 1054 870Z"/><path fill="#aeadb3" d="M1046 800C1046 825 1047 845 1050 856C1052 862 1054 866 1058 870C1054 860 1051 845 1050 825C1049 815 1049 806 1046 800Z"/>
  <!-- LOS SANTOS on car -->
  <text transform="matrix(0.1495 -0.0347 -0.014 0.147 1339.5 786.6)" font-family="Liberation Sans" font-weight="bold" font-size="100" fill="#0b0b0d" stroke="#e2e2e6" stroke-width="6">LOS SANTOS</text>
  <!-- POLICE on car -->
  <g transform="matrix(0.3032 -0.0927 -0.107 0.575 1321.4 840.3)" font-family="Liberation Sans" font-weight="bold" font-size="100" letter-spacing="-3">
    <text x="4" y="-1" fill="#0b0b0b" stroke="#0b0b0b" stroke-width="14" stroke-linejoin="round">POLICE</text>
    <text x="4" y="-1" fill="url(#polcar2)" stroke="url(#polcar2)" stroke-width="6" stroke-linejoin="round">POLICE</text>
  </g>
  <!-- DIAL 911 rear -->
  <text transform="matrix(0.0450 -0.0077 -0.0000 0.0929 1529.18 729.55)" font-family="Liberation Sans" font-weight="bold" font-size="100" fill="#111" stroke="#cfcfd4" stroke-width="5">DIAL</text>
  <text transform="matrix(0.0743 -0.0135 -0.0043 0.2143 1529.28 745.54)" font-family="Liberation Sans" font-weight="bold" font-size="100" letter-spacing="-6" fill="#111" stroke="#cfcfd4" stroke-width="5">911</text>
  <text x="1440" y="730" transform="rotate(-14 1440 730)" font-family="Liberation Sans" font-weight="bold" font-size="4.5" fill="#c96a6a">CAUTION K9 UNIT</text>
  <text x="1490" y="710" transform="rotate(-12 1490 710)" font-family="Liberation Sans" font-size="8" fill="none" stroke="#444" stroke-width="0.6">K-9</text>
</svg>

<div class="abs" style="left:1745.5px;top:511px;width:114px;height:462px;background:#161b25;border:1px solid #1c2230;border-radius:5px"></div>

<svg class="abs" style="left:834px;top:511px" width="100" height="462" viewBox="834 511 100 462">
  <g fill="#252b36">
    <rect x="841.1" y="580.2" width="83.9" height="13.8" rx="4"/>
    <rect x="841.1" y="597.3" width="83.9" height="13.8" rx="4"/>
    <rect x="907.1" y="618.3" width="17.9" height="9.2" rx="4.6" fill="#222733"/>
    <rect x="907.1" y="631.6" width="17.9" height="9.2" rx="4.6" fill="#222733"/>
    <rect x="869.2" y="659" width="56" height="8" rx="2" fill="#1d222b"/>
    <rect x="866" y="670.5" width="59.2" height="8" rx="2" fill="#1d222b"/>
    <rect x="901.3" y="681.5" width="23.9" height="8" rx="2" fill="#1d222b"/>
    <rect x="841.1" y="700.2" width="40.8" height="13.8" rx="4"/>
    <rect x="884.8" y="700.2" width="40.4" height="13.8" rx="4"/>
    <rect x="841.1" y="717.5" width="40.8" height="13.9" rx="4"/>
    <rect x="884.8" y="717.5" width="40.4" height="13.9" rx="4"/>
    <rect x="841.1" y="734.5" width="84.1" height="13.9" rx="4"/>
    <rect x="841.1" y="751.8" width="84.1" height="13.6" rx="4"/>
    <rect x="841.1" y="799.9" width="84.1" height="13.8" rx="4"/>
  </g>
  <rect x="842.6" y="530.9" width="12.2" height="12.1" rx="3" fill="#8a8a8a"/>
  <rect x="841.8" y="562.9" width="13.6" height="13.6" rx="3.5" fill="#1a1e23" stroke="#232833" stroke-width="0.8"/>
  <path d="M841 614.3h84" stroke="#1f2430" stroke-width="0.7"/>
  <circle cx="911.8" cy="622.9" r="3.7" fill="#0e1116"/>
  <circle cx="911.8" cy="636.2" r="3.7" fill="#0e1116"/>
  <g font-family="Liberation Sans" font-weight="bold" fill="#e8eaee" font-size="5.85">
    <text x="851" y="524.8">Base Color</text>
    <text x="851" y="557.4">Viewport</text>
    <text x="851" y="654.2">Navigation</text>
    <text x="851" y="778.7">Preview Export</text>
  </g>
  <g font-family="Liberation Mono" fill="#6b7280" font-size="4.9">
    <text x="860.9" y="538.5">#888888</text>
    <text x="860.9" y="571.2">#1A1E23</text>
  </g>
  <g font-family="Liberation Mono" fill="#9aa0aa" font-size="4.75" text-anchor="end">
    <text x="923.5" y="664.5">Left Click + Drag</text>
    <text x="923.5" y="676">Right Click + Drag</text>
    <text x="923.5" y="687">Scroll</text>
  </g>
  <g font-family="Liberation Sans" fill="#6b7280" font-size="4.9">
    <text x="841" y="624.6" textLength="35">Rendered View</text>
    <text x="841" y="637.8">Wireframe</text>
    <text x="841" y="664">Rotate</text>
    <text x="841" y="675.5">Pan</text>
    <text x="841" y="687">Zoom</text>
    <text x="841" y="788.6" textLength="83.5">Captures 5 angles (front, back, left,</text>
    <text x="841" y="795.1" textLength="74">right, top) and exports as a .zip</text>
  </g>
  <g font-family="Liberation Sans" font-weight="bold" fill="#e6e8ec" font-size="4.9" text-anchor="middle">
    <text x="883" y="588.8">Upload Image</text>
    <text x="883" y="605.9">Reset Defaults</text>
    <text x="861.5" y="708.8">Front</text>
    <text x="905" y="708.8">Back</text>
    <text x="861.5" y="726.2">Left</text>
    <text x="905" y="726.2">Right</text>
    <text x="883" y="743.2">Top</text>
    <text x="883" y="760.4">Reset View</text>
    <text x="883" y="808.5">Capture Preview</text>
  </g>
  <g stroke="#7c8491" stroke-width="0.6" fill="none" stroke-linecap="round">
    <path d="M920.5 523.3l1.5-1.5 1.5 1.5M920.5 556l1.5-1.5 1.5 1.5M920.5 652.8l1.5-1.5 1.5 1.5M920.5 777.3l1.5-1.5 1.5 1.5"/>
  </g>
  <g stroke="#3b82f6" stroke-width="0.9" fill="none" stroke-linecap="round" stroke-linejoin="round">
    <path d="M844 519.6c1.6-.6 3 .2 3.2 1.6.2 1.2-.8 1.6-1.3 2.2-.4.5-.1 1.4-1 1.6-1.3.3-2.6-.8-2.7-2.3-.1-1.3.6-2.7 1.8-3.1z"/>
    <path d="M841.6 552.5h5.8v3.8h-5.8zM844.5 556.3v1.4M843.2 557.8h2.6"/>
    <path d="M842 649.5a2.9 2.9 0 1 0 1.2 -1.2M842 647.5v2h2"/>
    <path d="M842.2 778.5a1.8 1.8 0 0 1 .4 -3.5a2.4 2.4 0 0 1 4.4 .6a1.5 1.5 0 0 1 .2 2.9zM844.5 777.8v-2M843.6 776.6l.9-.9.9.9"/>
  </g>
</svg>

<svg class="abs" style="left:1700px;top:505px" width="169" height="483" viewBox="1700 505 169 483">
  <defs>
    <filter id="glow" x="-30%" y="-60%" width="160%" height="220%"><feGaussianBlur stdDeviation="1.6"/></filter>
  </defs>
  <!-- expand button in viewport -->
  <rect x="1712" y="518" width="16.7" height="16.4" rx="4" fill="#232932"/>
  <path d="M1717.6 529l5-5M1720.3 524h2.3v2.3M1717.6 526.7v2.3h2.3" stroke="#d4d7dd" stroke-width="0.75" fill="none" stroke-linecap="round"/>
  <!-- model -->
  <rect x="1754.7" y="533.5" width="95.8" height="14.7" rx="3.5" fill="#0e1116" stroke="#1c2230" stroke-width="0.6"/>
  <rect x="1754" y="554" width="96.5" height="15.4" rx="4" fill="#232833"/>
  <path d="M1755 580.4h94M1755 717.2h94" stroke="#1d2230" stroke-width="0.6"/>
  <rect x="1753.9" y="604.2" width="47.2" height="13.8" rx="4" fill="#3b82f6" opacity="0.45" filter="url(#glow)"/>
  <rect x="1753.9" y="604.2" width="47.2" height="13.8" rx="4" fill="#3b82f6"/>
  <g fill="#252a35">
    <rect x="1804.2" y="604.2" width="46.8" height="13.8" rx="4"/>
    <rect x="1753.9" y="621.4" width="47.2" height="13.9" rx="4"/>
    <rect x="1804.2" y="621.4" width="46.8" height="13.9" rx="4"/>
    <rect x="1753.9" y="650.2" width="97.2" height="2.8" rx="1.4" fill="#232833"/>
    <rect x="1753.9" y="668.2" width="97.2" height="2.8" rx="1.4" fill="#232833"/>
    <rect x="1753.9" y="686.1" width="97.2" height="2.8" rx="1.4" fill="#232833"/>
    <rect x="1753.9" y="704" width="97.2" height="2.8" rx="1.4" fill="#232833"/>
  </g>
  <g fill="#3b82f6">
    <rect x="1753.9" y="650.2" width="63" height="2.8" rx="1.4"/>
    <rect x="1753.9" y="668.2" width="34.3" height="2.8" rx="1.4"/>
    <rect x="1753.9" y="686.1" width="44.2" height="2.8" rx="1.4"/>
    <rect x="1753.9" y="704" width="59.3" height="2.8" rx="1.4"/>
  </g>
  <g fill="#161b25" stroke="#3b82f6" stroke-width="1.1">
    <circle cx="1816.9" cy="651.6" r="3.5"/><circle cx="1788.2" cy="669.6" r="3.5"/><circle cx="1798.1" cy="687.5" r="3.5"/><circle cx="1813.2" cy="705.4" r="3.5"/>
  </g>
  <rect x="1754.9" y="737.5" width="94.8" height="28.8" rx="4" fill="none" stroke="#1c2230" stroke-width="0.7"/>
  <rect x="1754.9" y="772.4" width="95.1" height="83" rx="4" fill="none" stroke="#2c3340" stroke-width="0.7" stroke-dasharray="1.8 1.2"/>
  <circle cx="1801.7" cy="792.5" r="9.8" fill="#1d222c"/>
  <rect x="1754" y="861" width="96.5" height="23.4" rx="4" fill="#232833"/>
  <!-- scrollbar -->
  <rect x="1747" y="966.5" width="111" height="5.5" fill="#121519"/>
  <rect x="1753.5" y="968" width="98.5" height="2.6" rx="1.3" fill="#c9c9c9"/>
  <path d="M1748 969.3l2-1.5v3zM1857 969.3l-2-1.5v3z" fill="#c9c9c9"/>
  <g font-family="Liberation Sans" font-weight="bold" fill="#e8eaee" font-size="5.85">
    <text x="1763.8" y="526.5">Model</text>
    <text x="1763.8" y="596.2">Material</text>
    <text x="1763.8" y="733.8">Textures</text>
  </g>
  <g font-family="Liberation Sans" fill="#e6e8ec" font-size="5">
    <text x="1759" y="543.2" font-size="5.6" textLength="56.5">2020 Dodge Charger</text>
    <text x="1781.5" y="564.6" font-weight="bold" font-size="5.6" textLength="51.5">Import Model / YFT</text>
  </g>
  <g font-family="Liberation Sans" font-weight="bold" fill="#e6e8ec" font-size="4.9" text-anchor="middle">
    <text x="1777.5" y="612.8" fill="#fff">Paint</text>
    <text x="1827.6" y="612.8">Chrome</text>
    <text x="1777.5" y="630">Plastic</text>
    <text x="1827.6" y="630">Glass</text>
    <text x="1801.7" y="813.5" font-size="5.6" fill="#eef0f3">Drop texture here</text>
    <text x="1806" y="870.9" font-size="5.3">Live PSD/PDN (auto-</text>
    <text x="1806" y="878.9" font-size="5.3">update)</text>
  </g>
  <g font-family="Liberation Sans" fill="#737a86" font-size="5.1">
    <text x="1753.9" y="645">Metallic</text><text x="1753.9" y="663">Roughness</text><text x="1753.9" y="681" textLength="43">Specular Intensity</text><text x="1753.9" y="699">Clearcoat</text>
  </g>
  <g font-family="Liberation Sans" fill="#737a86" font-size="5.1" text-anchor="end">
    <text x="1851" y="645">0.66</text><text x="1851" y="663">0.34</text><text x="1851" y="681">0.45</text><text x="1851" y="699">0.62</text>
  </g>
  <g font-family="Liberation Sans" fill="#9aa0aa" font-size="6" text-anchor="middle">
    <text x="1802" y="749.2">20chalbk9 Police.png</text>
    <text x="1802" y="760.3" font-size="4.9">1 / 2</text>
  </g>
  <g font-family="Liberation Sans" fill="#5f6673" font-size="4.7" text-anchor="middle">
    <text x="1802" y="821.8">PNG, JPG, DDS, PSD, PDN, or</text>
    <text x="1802" y="828.6">click to browse</text>
    <text x="1802" y="836.6">Live PSD/PDN enables auto-</text>
    <text x="1802" y="843.4">update on save</text>
  </g>
  <g stroke="#7c8491" stroke-width="0.6" fill="none" stroke-linecap="round" stroke-linejoin="round">
    <path d="M1840.5 539.9l1.6 1.6 1.6-1.6"/>
    <path d="M1846.5 595l1.5-1.5 1.5 1.5M1846.5 732.5l1.5-1.5 1.5 1.5"/>
    <path d="M1765.2 745.8l-1.2 1.4 1.2 1.4M1838.8 745.8l1.2 1.4-1.2 1.4" stroke="#8a909b"/>
    <path d="M1853.5 804.5l3 3M1856.5 804.5l-3 3" stroke="#6d7480"/>
  </g>
  <g stroke="#d7dae0" stroke-width="0.75" fill="none" stroke-linecap="round" stroke-linejoin="round">
    <path d="M1773 562.8v1.5h5.2v-1.5M1775.6 563v-4M1774.1 560.3l1.5-1.5 1.5 1.5"/>
    <path d="M1798.8 793.5v2h5.8v-2M1801.7 794v-4.6M1800 791l1.7-1.7 1.7 1.7" stroke="#c9ccd2"/>
    <path d="M1762.2 871.5a2.3 2.3 0 0 1 4 -1.2M1766.5 873.5a2.3 2.3 0 0 1 -4 1.2M1766.2 869.3v1.2h-1.2M1762.5 875.7v-1.2h1.2" stroke-width="0.6"/>
  </g>
  <g stroke="#3b82f6" stroke-width="0.9" fill="none" stroke-linecap="round" stroke-linejoin="round">
    <path d="M1757.2 521l2.4 1.2v2.8l-2.4 1.3-2.4-1.3v-2.8zM1754.8 522.2l2.4 1.3 2.4-1.3M1757.2 523.5v2.8"/>
    <path d="M1757 591.3c1.6-.6 3 .2 3.2 1.6.2 1.2-.8 1.6-1.3 2.2-.4.5-.1 1.4-1 1.6-1.3.3-2.6-.8-2.7-2.3-.1-1.3.6-2.7 1.8-3.1z"/>
    <path d="M1754.7 729.1h5.6v5.6h-5.6zM1757.5 729.1v5.6M1754.7 731.9h5.6" stroke-width="0.8"/>
  </g>
</svg>
<!-- caption -->
<div class="abs" style="left:949.4px;top:952.6px;width:175px;height:13.2px;background:#161a21;border:0.7px solid #20252f;border-radius:4px"></div>
<div class="abs" style="left:954px;top:956px;font:4.9px/7px 'Liberation Mono';color:#b8bcc4;white-space:nowrap">Model: <span style="color:#3b82f6">2020 Dodge Charger</span> · Texture: <span style="color:#3b82f6">20chalbk9 Police.png</span></div>

</div></body></html>
